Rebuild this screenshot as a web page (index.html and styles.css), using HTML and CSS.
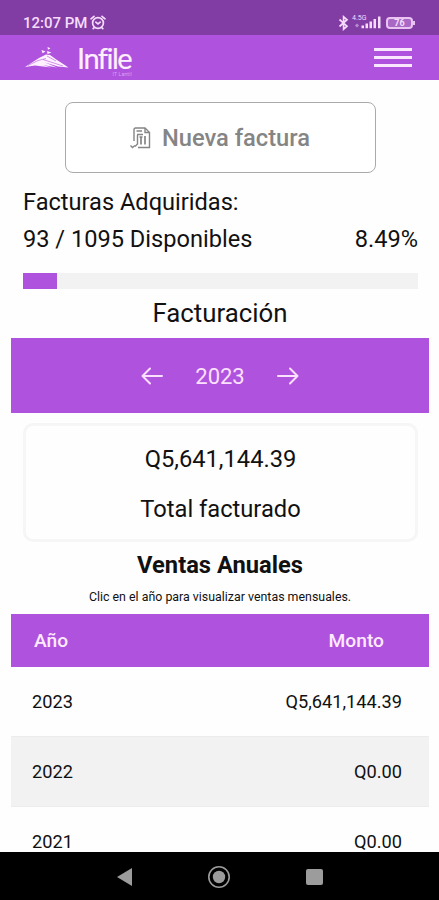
FILE: index.html
```
<!DOCTYPE html>
<html lang="es">
<head>
    <meta charset="UTF-8">
    <meta name="viewport" content="width=device-width, initial-scale=1.0">
    <title>Infile - Facturación</title>
    <link rel="stylesheet" href="styles.css">
</head>
<body>
    <!-- Status bar -->
    <div class="status-bar">
        <span class="clock">12:07 PM</span>
        <svg class="alarm" width="16" height="16" viewBox="0 0 16 16" fill="none" stroke="currentColor" stroke-width="1.7" stroke-linecap="round">
            <circle cx="8" cy="8" r="5.4"/>
            <path d="M5.8 7.2 8 9l2.2-1.8M1 3.8 4 1.3M15 3.8 12 1.3M4 12.8l-.8.8M12 12.8l.8.8"/>
        </svg>
        <div class="status-icons">
            <svg width="12" height="16" viewBox="0 0 12 16" fill="none" stroke="currentColor" stroke-width="1.7">
                <path d="M1.5 4.5 9 11.2 5.6 14.2V1.8L9 4.7 1.5 11.5"/>
            </svg>
            <div class="signal">
                <span class="network">4.5G</span>
                <svg width="30" height="15" viewBox="0 0 30 15" fill="currentColor">
                    <path d="M3 10.5 5 8.5l2 2-2 2z" opacity=".5"/>
                    <path d="M9.5 10.5H12v2.7H9.5zM13.5 8.5H16v4.7h-2.5zM17.5 6.5H20v6.7h-2.5zM21.5 4H24v9.2h-2.5zM26 1.5h2.5v11.7H26z"/>
                </svg>
            </div>
            <div class="battery">76</div>
        </div>
    </div>

    <!-- Header -->
    <header>
        <svg class="logo-icon" width="44" height="22" viewBox="0 0 44 22" fill="currentColor">
            <path d="M0 20 14 11 21 7.5 25 8 32 13 43.5 20.5 33 19.5 20 15.500 32 20.500 18 18 26 20.500 10 18.500z"/>
            <path d="M3 18.5 13 13.5 21 11.5M18 12.5 38 19M22 9l9 5" fill="none" stroke="#af52de" stroke-width=".6"/>
            <path d="m16.500 3 4 1.500-3 1.800zM22.500 0l3 1.200-2.500 1.600zM22 4l4.500 1.400-4 1.700z"/>
        </svg>
        <div class="logo-text">
            <span class="logo-name">Infile</span>
            <span class="logo-tag">IT Lantil</span>
        </div>
        <button class="menu-button" aria-label="Menú">
            <span></span>
            <span></span>
            <span></span>
        </button>
    </header>

    <main>
        <button class="new-invoice">
            <svg width="22" height="22" viewBox="0 0 22 22" fill="none" stroke="currentColor" stroke-width="1.4">
                <path d="M4 14V2.5Q4 1 5.5 1H15l4.5 4.5v15H8"/>
                <path d="M15 1v4.5h4.5M6.5 4H12M7 7.5h6M5 19.5 7.5 17V8M.5 18.5l2 2 2.5-2"/>
                <path d="M11 9.5v8M15 9v8.5M9.5 10h3" stroke-width="1.7"/>
            </svg>
            Nueva factura
        </button>

        <!-- Invoice quota -->
        <section class="quota">
            <p>Facturas Adquiridas:</p>
            <p class="quota-row"><span>93 / 1095 Disponibles</span><span>8.49%</span></p>
            <div class="progress">
                <div class="progress-fill" style="width: 8.49%"></div>
            </div>
        </section>

        <h2>Facturación</h2>
        <div class="year-picker">
            <svg width="22" height="18" viewBox="0 0 22 18">
                <path d="M21 9H1.5M9 1.5 1.5 9 9 16.5"/>
            </svg>
            <span>2023</span>
            <svg width="22" height="18" viewBox="0 0 22 18">
                <path d="M1 9h19.5M13 1.5 20.5 9 13 16.5"/>
            </svg>
        </div>

        <div class="total-card">
            <p>Q5,641,144.39</p>
            <p>Total facturado</p>
        </div>

        <!-- Yearly sales -->
        <h3>Ventas Anuales</h3>
        <p class="hint">Clic en el año para visualizar ventas mensuales.</p>
        <table>
            <thead>
                <tr>
                    <th>Año</th>
                    <th>Monto</th>
                </tr>
            </thead>
            <tbody>
                <tr>
                    <td>2023</td>
                    <td>Q5,641,144.39</td>
                </tr>
                <tr>
                    <td>2022</td>
                    <td>Q0.00</td>
                </tr>
                <tr>
                    <td>2021</td>
                    <td>Q0.00</td>
                </tr>
            </tbody>
        </table>
    </main>

    <!-- System navigation -->
    <nav>
        <svg width="16" height="18" viewBox="0 0 16 18"><path d="M1 9 16 0v18z" fill="currentColor"/></svg>
        <svg width="24" height="24" viewBox="0 0 24 24">
            <circle cx="12" cy="12" r="10.2" fill="none" stroke="currentColor" stroke-width="1.6"/>
            <circle cx="12" cy="12" r="6.2" fill="currentColor"/>
        </svg>
        <svg width="17" height="16" viewBox="0 0 17 16"><rect width="17" height="16" rx="2" fill="currentColor"/></svg>
    </nav>
</body>
</html>
```

FILE: styles.css
```
* {
    box-sizing: border-box;
}

body {
    margin: 0;
    height: 900px;
    display: flex;
    flex-direction: column;
    overflow: hidden;
    background: #fefefe;
    color: #111;
    font-family: Roboto, sans-serif;
}

h2, h3, p {
    margin: 0;
}

button {
    font-family: inherit;
}

.status-bar {
    height: 35px;
    flex-shrink: 0;
    display: flex;
    align-items: center;
    padding: 10px 23px 0;
    background: #823da5;
    color: #f6dcfc;
}

.clock {
    width: 66px;
    padding-top: 1px;
    font-size: 15px;
    font-weight: 500;
    white-space: nowrap;
}

.alarm {
    margin-left: 1px;
}

.status-icons {
    display: flex;
    align-items: center;
    margin-left: auto;
}

.signal {
    position: relative;
    display: flex;
    margin: 0 4px 0 2px;
}

.network {
    position: absolute;
    top: 0;
    left: 0;
    font-size: 7px;
    line-height: 7px;
}

.battery {
    position: relative;
    width: 27px;
    height: 12px;
    margin-right: 3px;
    border: 2px solid #e9c4f2;
    border-radius: 4px;
    background: #a868c4;
    font-size: 9px;
    font-weight: 700;
    line-height: 8px;
    text-align: center;
}

.battery::after {
    content: "";
    position: absolute;
    top: 2px;
    right: -4px;
    width: 2px;
    height: 4px;
    background: #e9c4f2;
}

header {
    height: 45px;
    flex-shrink: 0;
    display: flex;
    align-items: flex-start;
    padding: 0 27px 0 25px;
    background: #af52de;
    color: #fff0ff;
}

.logo-icon {
    margin-top: 12px;
}

.logo-text {
    display: flex;
    flex-direction: column;
    width: 55px;
    margin: 10px 0 0 8px;
}

.logo-name {
    font-family: Lato, sans-serif;
    font-size: 29px;
    line-height: 25px;
    letter-spacing: -1.5px;
    -webkit-text-stroke: 0.2px #fff0ff;
}

.logo-tag {
    margin-top: 2px;
    align-self: flex-end;
    font-size: 5px;
    line-height: 5px;
    letter-spacing: 0.2px;
    color: #dba3f0;
}

.menu-button {
    display: flex;
    flex-direction: column;
    gap: 5px;
    width: 38px;
    margin: 13px 0 0 auto;
    padding: 0;
    border: none;
    background: none;
}

.menu-button span {
    height: 3px;
    background: #fbe6ff;
}

main {
    flex: 1;
    min-height: 0;
    display: flex;
    flex-direction: column;
    overflow: hidden;
    padding: 0 10px 0 11px;
}

.new-invoice {
    flex-shrink: 0;
    display: flex;
    align-items: center;
    justify-content: center;
    gap: 10px;
    width: 311px;
    height: 71px;
    margin: 22px 0 0 54px;
    padding: 0 1px 0 0;
    border: 1px solid #aaa;
    border-radius: 8px;
    background: #fff;
    color: #858585;
    font-size: 23.7px;
    font-weight: 500;
}

.quota {
    flex-shrink: 0;
    padding: 11px 11px 0 12px;
    font-size: 23.6px;
    line-height: 37px;
}

.quota-row {
    display: flex;
    justify-content: space-between;
}

.progress {
    height: 16px;
    margin-top: 15px;
    background: #f2f2f2;
}

.progress-fill {
    height: 100%;
    background: #af52de;
}

h2 {
    flex-shrink: 0;
    margin-top: 7px;
    font-size: 25.8px;
    font-weight: 400;
    line-height: 34px;
    text-align: center;
}

.year-picker {
    height: 75px;
    flex-shrink: 0;
    display: flex;
    align-items: center;
    justify-content: center;
    gap: 32px;
    margin-top: 8px;
    background: #af52de;
    color: #fbe0ff;
    font-size: 22px;
}

.year-picker span {
    padding-top: 1px;
}

.year-picker svg {
    fill: none;
    stroke: #fbe0ff;
    stroke-width: 2;
    stroke-linecap: round;
    stroke-linejoin: round;
}

.total-card {
    height: 119px;
    flex-shrink: 0;
    margin: 10px 11px 0 12px;
    padding-top: 8px;
    border: 3px solid #f6f6f6;
    border-radius: 10px;
    font-size: 23.7px;
    line-height: 50px;
    text-align: center;
}

h3 {
    flex-shrink: 0;
    margin-top: 7px;
    font-size: 23.7px;
    font-weight: 700;
    line-height: 32px;
    text-align: center;
}

.hint {
    flex-shrink: 0;
    margin: 8px 0 9px;
    font-size: 12.4px;
    line-height: 16px;
    text-align: center;
}

table {
    width: 100%;
    flex-shrink: 0;
    border-spacing: 0;
}

th, td {
    padding: 0 27px 0 21px;
    font-size: 18.2px;
    text-align: left;
}

th {
    height: 53px;
    padding: 0 45px 0 23px;
    background: #af52de;
    color: #fdeaff;
    font-size: 19.2px;
    font-weight: 500;
}

td {
    height: 70px;
    padding-bottom: 1px;
    border-bottom: 1px solid #ececec;
}

th:last-child, td:last-child {
    text-align: right;
}

tbody tr:nth-child(even) {
    background: #f2f2f2;
}

nav {
    height: 48px;
    flex-shrink: 0;
    display: flex;
    align-items: center;
    justify-content: center;
    gap: 75px;
    padding-top: 1px;
    background: #000;
    color: #9c9c9c;
}
```
